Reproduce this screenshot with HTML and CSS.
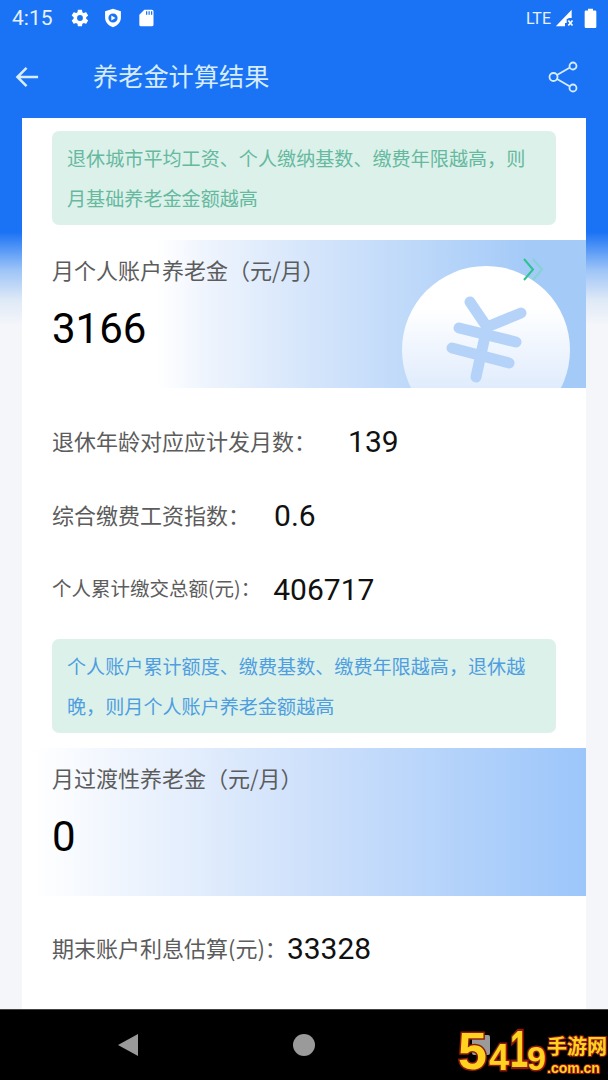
FILE: index.html
```html
<!DOCTYPE html>
<html lang="zh-CN">
<head>
  <meta charset="UTF-8" />
  <meta name="viewport" content="width=device-width, initial-scale=1" />
  <title>养老金计算结果</title>
  <link rel="stylesheet" href="styles.css">
</head>
<body>

<div class="screen">
  <header class="topbar">
    <div class="status">
      <span class="clock">4:15</span>
      <svg class="status-icon" viewBox="0 0 24 24"><path fill="#fff" fill-rule="evenodd" d="M19.400 13c.1-.3.1-.7.1-1s0-.7-.1-1l2.100-1.600c.2-.2.2-.4.1-.6l-2-3.500c-.1-.2-.4-.3-.6-.2l-2.500 1c-.5-.4-1.100-.7-1.700-1L14.400 2.400c0-.2-.2-.4-.5-.4h-4c-.2 0-.5.2-.5.4L9 5.100c-.6.3-1.200.6-1.700 1l-2.500-1c-.2-.1-.5 0-.6.2l-2 3.500c-.1.200-.1.400.1.600L4.400 11c-.1.300-.1.700-.1 1s0 .7.100 1l-2.100 1.600c-.2.200-.2.400-.1.600l2 3.500c.1.200.4.300.6.200l2.500-1c.5.400 1.100.7 1.700 1l.4 2.700c0 .2.300.4.500.4h4c.3 0 .5-.2.5-.4l.4-2.700c.6-.3 1.200-.6 1.700-1l2.500 1c.2.100.5 0 .6-.2l2-3.500c.1-.2.1-.4-.1-.6zM12 15.500a3.500 3.500 0 1 1 0-7 3.500 3.500 0 0 1 0 7z"/></svg>
      <svg class="status-icon" viewBox="0 0 24 24"><path fill="#fff" fill-rule="evenodd" d="M12 1 2.500 4v7.500c0 5.500 4 9.800 9.500 11.500 5.500-1.700 9.500-6 9.500-11.500V4zM12 6.500a5.500 5.500 0 1 1 0 11 5.500 5.500 0 0 1 0-11z"/><path fill="#fff" d="m10 9 5 3-5 3z"/></svg>
      <svg class="status-icon" viewBox="0 0 24 24"><path fill="#fff" fill-rule="evenodd" d="M10 2H19a2 2 0 0 1 2 2v16a2 2 0 0 1-2 2H6a2 2 0 0 1-2-2V8zM12 4v4h1.500V4zM15 4v4h1.500V4zM18 4v4h1.500V4z"/></svg>
      <span class="status-gap"></span>
      <span class="lte">LTE</span>
      <svg class="signal" viewBox="0 0 24 24"><path fill="#fff" d="M20 2v10h-4v6h-4v4H1z"/><path d="M14 13h9v10h-9z" fill="#1a73f5"/><path stroke="#fff" stroke-width="2" d="m16 15 5 6m0-6-5 6"/></svg>
      <svg class="battery" viewBox="0 0 14 24"><path fill="#fff" d="M4 1h6v2h2.500A1.500 1.500 0 0 1 14 4.500v18a1.500 1.500 0 0 1-1.500 1.500h-11A1.500 1.500 0 0 1 0 22.500v-18A1.500 1.500 0 0 1 1.500 3H4z"/></svg>
    </div>
    <div class="toolbar">
      <svg class="back" viewBox="0 0 26 24"><path fill="none" stroke="#d6ecff" stroke-width="2.600" d="M24 12H3m9-9.500L2.500 12l9.500 9.500"/></svg>
      <h1>养老金计算结果</h1>
      <svg class="share" viewBox="0 0 30 32"><g fill="none" stroke="#d6ecff" stroke-width="1.800"><circle cx="5.500" cy="16" r="4"/><circle cx="25" cy="5" r="3.500"/><circle cx="25" cy="27" r="3.500"/><path d="m9 14 13-7.500M9 18l13 7.500"/></g></svg>
    </div>
  </header>

  <main class="card">
    <p class="tip tip-green">退休城市平均工资、个人缴纳基数、缴费年限越高，则月基础养老金金额越高</p>

    <section class="banner">
      <div class="banner-label">月个人账户养老金（元/月）</div>
      <div class="banner-value">3166</div>
      <div class="coin">
        <svg class="yen" viewBox="0 0 168 168"><g fill="none" stroke="#b5d3f9" stroke-width="11" stroke-linecap="round"><path d="M68 36 85 61 119 47"/><path d="M85 61 74 111"/><path d="M57 62 114 76"/><path d="M50 82 107 97"/></g></svg>
      </div>
      <svg class="chevrons" viewBox="0 0 22 24"><g fill="none" stroke-width="2"><path stroke="#86d2d4" d="m11 1 9 10.500-9 10.500"/><path stroke="#2fc28f" d="m2 1 9 10.500-9 10.500"/></g></svg>
    </section>

    <div class="row"><span class="row-name">退休年龄对应应计发月数：</span><span class="row-value gap-wide">139</span></div>
    <div class="row"><span class="row-name">综合缴费工资指数：</span><span class="row-value gap-mid">0.6</span></div>
    <div class="row"><span class="row-name small">个人累计缴交总额(元)：</span><span class="row-value gap-small">406717</span></div>

    <p class="tip tip-blue">个人账户累计额度、缴费基数、缴费年限越高，退休越晚，则月个人账户养老金额越高</p>

    <section class="banner banner-plain">
      <div class="banner-label">月过渡性养老金（元/月）</div>
      <div class="banner-value">0</div>
    </section>

    <div class="row row-last"><span class="row-name">期末账户利息估算(元)：</span><span class="row-value">33328</span></div>
  </main>

  <nav class="navbar">
    <svg class="nav-back" viewBox="0 0 24 24"><path fill="#9a9a9a" d="M22 1v22L2 12z"/></svg>
    <span class="nav-home"></span>
    <span class="nav-recent"></span>
  </nav>

  <div class="watermark">
    <span class="wm-five">5</span><span class="wm-four">4</span><span class="wm-one">1</span><span class="wm-nine">9</span>
    <span class="wm-side"><span class="wm-cn">手游网</span><span class="wm-url">.com.cn</span></span>
  </div>
</div>

</body>
</html>
```

FILE: styles.css
```css
* {
  box-sizing: border-box;
}
body {
  margin: 0;
  font-family: "Noto Sans CJK SC", "Noto Sans", sans-serif;
  background: #f4f6fa;
}
.screen {
  position: relative;
  width: 608px;
  height: 1080px;
  overflow: hidden;
  display: flex;
  flex-direction: column;
  background: linear-gradient(#1a73f5 0, #1a73f5 232px, #9cc4f7 270px, #dfe9f7 300px, #f4f6fa 325px);
}
.topbar {
  height: 118px;
  flex: none;
}
.status {
  height: 36px;
  padding: 0 11px 0 12px;
  display: flex;
  align-items: center;
  color: #e6f1ff;
}
.clock {
  font-family: Roboto, sans-serif;
  font-size: 21px;
  width: 58px;
}
.status-icon {
  width: 20px;
  height: 20px;
  margin-right: 13px;
}
.status-gap {
  flex: 1;
}
.lte {
  font-family: Roboto, sans-serif;
  font-size: 16px;
  margin-right: 4px;
}
.signal {
  width: 20px;
  height: 20px;
  margin-right: 9px;
}
.battery {
  width: 13px;
  height: 20px;
}
.toolbar {
  height: 82px;
  display: flex;
  align-items: center;
  padding: 0 30px 0 15px;
}
.toolbar h1 {
  flex: 1;
  margin: 0 0 5px 53px;
  font-size: 25.200px;
  font-weight: 400;
  color: #d6ecff;
}
.back {
  width: 25px;
  height: 24px;
}
.share {
  width: 30px;
  height: 32px;
}
.card {
  flex: 1;
  margin: 0 22px;
  padding-top: 13px;
  background: #fff;
  min-height: 0;
}
.tip {
  margin: 0 30px;
  height: 94px;
  padding: 7px 15px;
  border-radius: 7px;
  background: #dcf1ea;
  font-size: 19.100px;
  line-height: 40px;
}
.tip-green {
  color: #66b99f;
}
.tip-blue {
  color: #4f9ee0;
  margin-top: 13px;
}
.banner {
  position: relative;
  height: 148px;
  margin-top: 15px;
  padding: 13px 30px 0;
  overflow: hidden;
  background: linear-gradient(90deg, #fff 24%, #eef4fd 33%, #d6e6fb 50%, #a4caf8 90%);
}
.banner-plain {
  background: linear-gradient(90deg, #fff 2%, #cfe1fb 50%, #9cc6fa 100%);
}
.banner-label {
  font-size: 22px;
  line-height: 32px;
  color: #5c5c5c;
}
.banner-value {
  margin-top: 19px;
  font-family: Roboto, sans-serif;
  font-size: 42px;
  line-height: 50px;
  color: #000;
}
.coin {
  position: absolute;
  left: 380px;
  top: 26px;
  width: 168px;
  height: 168px;
  border-radius: 50%;
  background: linear-gradient(#fff 25%, #dbe9fc 80%);
}
.yen {
  display: block;
  width: 168px;
  height: 168px;
}
.chevrons {
  position: absolute;
  left: 500px;
  top: 18px;
  width: 22px;
  height: 24px;
}
.row {
  height: 74px;
  padding-left: 30px;
  display: flex;
  align-items: center;
}
.banner + .row {
  margin-top: 16px;
}
.banner + .row-last {
  margin-top: 15px;
}
.row-name {
  font-size: 22px;
  color: #5c5c5c;
  margin-bottom: 3px;
}
.row-name.small {
  font-size: 19.500px;
}
.row-value {
  font-family: Roboto, sans-serif;
  font-size: 30px;
  color: #111;
}
.gap-wide {
  margin-left: 32px;
}
.gap-mid {
  margin-left: 24px;
}
.gap-small {
  margin-left: 13px;
}
.navbar {
  height: 71px;
  flex: none;
  background: #000;
  border-top: 1px solid #444;
  display: flex;
  align-items: center;
  padding-left: 116px;
}
.nav-back {
  width: 24px;
  height: 24px;
  margin-right: 153px;
}
.nav-home {
  width: 22px;
  height: 22px;
  border-radius: 50%;
  background: #9a9a9a;
  margin-right: 157px;
}
.nav-recent {
  width: 18px;
  height: 20px;
  border-radius: 2px;
  background: #9a9a9a;
}
.watermark {
  position: absolute;
  left: 458px;
  top: 1028px;
  width: 150px;
  height: 48px;
  display: flex;
  align-items: flex-end;
  color: #ffd21f;
  font-family: "Liberation Sans", sans-serif;
  font-weight: 700;
  -webkit-text-stroke: 3px #8e1a10;
  paint-order: stroke fill;
}
.wm-five {
  font-size: 52px;
  line-height: 58px;
  width: 31px;
  flex: none;
  margin-bottom: -4px;
}
.wm-four {
  font-size: 36px;
  line-height: 36px;
  width: 21px;
}
.wm-one {
  font-size: 36px;
  line-height: 36px;
  width: 17px;
  transform: scale(0.9, 1.45);
  transform-origin: left bottom;
}
.wm-nine {
  font-size: 34px;
  line-height: 36px;
  width: 20px;
}
.wm-side {
  display: flex;
  flex-direction: column;
  margin-bottom: 1px;
  -webkit-text-stroke: 2px #8e1a10;
}
.wm-cn {
  font-family: "Noto Sans CJK SC", sans-serif;
  font-size: 20px;
  line-height: 30px;
  white-space: nowrap;
}
.wm-url {
  font-size: 14px;
  line-height: 14px;
  white-space: nowrap;
}
```
